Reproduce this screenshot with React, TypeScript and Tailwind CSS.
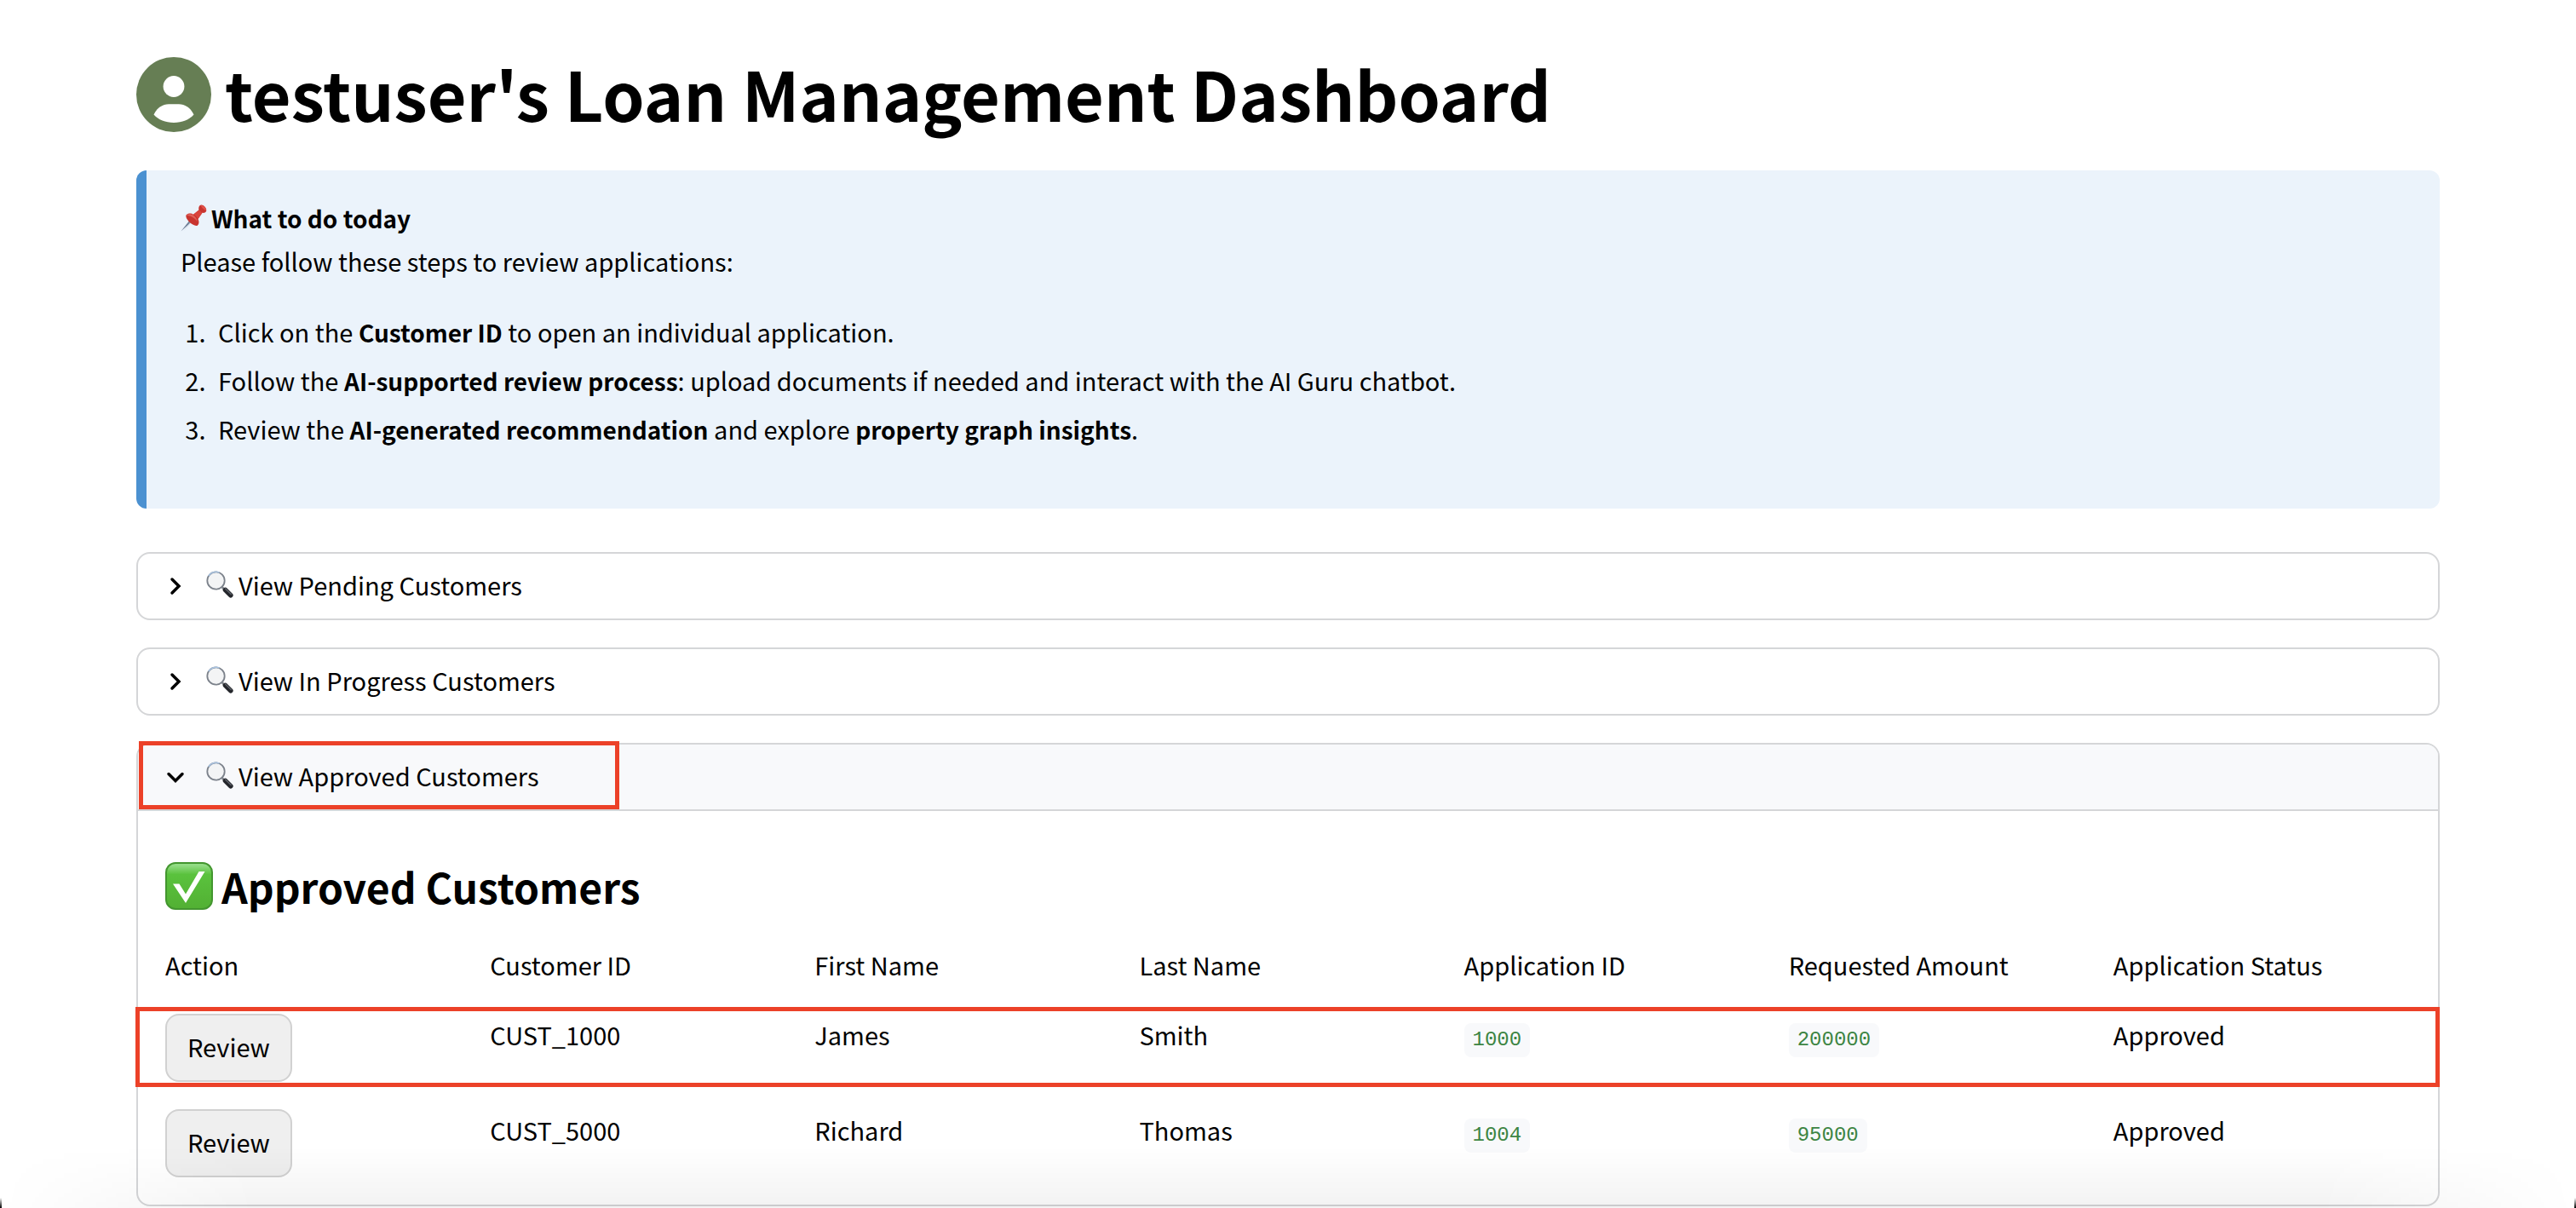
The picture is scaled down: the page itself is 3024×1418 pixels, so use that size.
import { useState } from "react";
import type { ReactNode } from "react";

function Avatar() {
  return (
    <svg viewBox="0 0 88 88" className="size-[88px] shrink-0" aria-hidden="true">
      <circle cx="44" cy="44" r="44" fill="#667e54" />
      <circle cx="44" cy="34.500" r="12.400" fill="#fff" />
      <path d="M20.500 67.500C25 58.500 31 55.500 38 55.200h12c7 .3 13 3.300 17.500 12.300C62 73.500 54 77 44 77s-18-3.500-23.500-9.500z" fill="#fff" />
    </svg>
  );
}

function Pin() {
  return (
    <svg viewBox="0 0 32 32" className="size-8 shrink-0" aria-hidden="true">
      <path d="M.4 31.600 11.500 17.500l2.500 2z" fill="#6f7f97" />
      <path d="M3.500 31.600 11.500 20l1.500.5z" fill="#c3ccd8" opacity=".6" />
      <path d="M6.500 12.500c2.500-2.700 6-2.500 8.500-.7l6.500-5.300c-.7-2.500 0-5 2-5.800 3-1 7.300 3.200 6.700 6.800-.4 2-2.500 2.800-4.700 2.300l-5 7.200c1.500 3 1.300 6.500-1 8-4 .8-14.500-7-13-12.500z" fill="#c8342f" />
      <path d="m15 11.800 6.500-5.300 4 3.300-5 7.200c-1-2-3-4.200-5.500-5.200z" fill="#d9443d" />
      <path d="M7 12.800c2-2 5-2 7.500-.5 3 2 5 5 5.300 8-2-3.300-7-7-12.800-7.500z" fill="#e06058" />
      <path d="M23.700 1c3-.7 6.500 3 6.300 6-2.500-.5-5.500-3.200-6.300-6z" fill="#e0524a" />
    </svg>
  );
}

function Magnifier() {
  return (
    <svg viewBox="0 0 32 32" className="size-8 shrink-0" aria-hidden="true">
      <path d="m18.500 19 3.500 3.500" stroke="#85898f" strokeWidth="2.500" />
      <path d="m22.500 22.500 6.300 6.200" stroke="#24262b" strokeWidth="5.600" strokeLinecap="round" />
      <path d="m22.500 21 6.800 6.600" stroke="#5e626a" strokeWidth="1.400" strokeLinecap="round" />
      <circle cx="11.500" cy="11.500" r="10.200" fill="#f3f4f5" stroke="#7c828b" strokeWidth="1.800" />
      <path d="M2.800 6.200A10.200 10.200 0 0 1 15.500 2" stroke="#a9c3e0" strokeWidth="1.500" fill="none" />
    </svg>
  );
}

function CheckMark() {
  return (
    <svg viewBox="0 0 56 56" className="size-14 shrink-0" aria-hidden="true">
      <defs>
        <linearGradient id="check-fill" x1="0" y1="0" x2="0" y2="1">
          <stop offset="0.050" stopColor="#93dc85" />
          <stop offset="0.250" stopColor="#5ac23d" />
          <stop offset="1" stopColor="#52b033" />
        </linearGradient>
      </defs>
      <rect x="1" y="1" width="54" height="54" rx="11" fill="url(#check-fill)" stroke="#43962f" strokeWidth="2" />
      <path d="M9 25.500h7.500L24 37.500 39.500 11H46.500L24 48z" fill="#fff" />
    </svg>
  );
}

function Chevron({ open }: { open: boolean }) {
  return (
    <svg
      viewBox="0 0 24 24"
      className="size-6 shrink-0"
      fill="none"
      stroke="#000"
      strokeWidth="3.500"
      strokeLinecap="round"
      aria-hidden="true"
    >
      {open ? <path d="m4 8.500 8 8 8-8" /> : <path d="m8 4 8 8-8 8" />}
    </svg>
  );
}

function Expander({
  title,
  defaultOpen = false,
  highlighted = false,
  children,
}: {
  title: string;
  defaultOpen?: boolean;
  highlighted?: boolean;
  children?: ReactNode;
}) {
  const [open, setOpen] = useState(defaultOpen);
  return (
    <section className="rounded-2xl border-2 border-[#d5d6d8]">
      <h2 className="relative">
        <button
          type="button"
          aria-expanded={open}
          onClick={() => setOpen(!open)}
          className={
            open
              ? "flex h-[78px] w-full items-center rounded-t-[14px] border-b-2 border-[#d5d6d8] bg-[#f8f9fb] px-8"
              : "flex h-[76px] w-full items-center px-8"
          }
        >
          <Chevron open={open} />
          <span className="ml-6 flex items-center gap-1.5 pb-1">
            <Magnifier />
            {title}
          </span>
        </button>
        {highlighted && (
          <span className="pointer-events-none absolute -top-1 left-px h-20 w-[564px] border-5 border-[#ec4128]" />
        )}
      </h2>
      {open && children}
    </section>
  );
}

const columns = [
  "Action",
  "Customer ID",
  "First Name",
  "Last Name",
  "Application ID",
  "Requested Amount",
  "Application Status",
];

const customers = [
  { id: "CUST_1000", first: "James", last: "Smith", application: "1000", amount: "200000", status: "Approved", highlighted: true },
  { id: "CUST_5000", first: "Richard", last: "Thomas", application: "1004", amount: "95000", status: "Approved", highlighted: false },
];

function Code({ children }: { children: ReactNode }) {
  return (
    <code className="mt-1.5 inline-block rounded-lg bg-[#f8f9fb] px-2.5 font-['Liberation_Mono',monospace] text-[24px] leading-10 text-[#3d8543]">
      {children}
    </code>
  );
}

function Strong({ children }: { children: ReactNode }) {
  return <strong className="text-[28px] leading-none font-bold">{children}</strong>;
}

export default function App() {
  return (
    <div className="min-h-screen bg-white font-['Noto_Sans_CJK_SC',sans-serif] text-[29px] leading-[51px] text-black">
      <main className="px-40 pt-14">
        <h1 className="flex items-center gap-4 text-[79px] leading-[106px] font-bold">
          <Avatar />
          <span className="pb-1">testuser's Loan Management Dashboard</span>
        </h1>

        <section className="mt-[34px] rounded-xl border-l-12 border-[#4b91d1] bg-[#ebf3fb] px-10 pt-[30px] pb-[68px]">
          <p className="flex items-center gap-1">
            <Pin />
            <span>
              <Strong>What to do today</Strong>
            </span>
          </p>
          <p>Please follow these steps to review applications:</p>
          <ol className="mt-8 ml-9 flex list-decimal flex-col gap-1.5">
            <li className="pl-2">
              Click on the <Strong>Customer ID</Strong> to open an individual application.
            </li>
            <li className="pl-2">
              Follow the <Strong>AI-supported review process</Strong>: upload documents if needed and interact with the
              AI Guru chatbot.
            </li>
            <li className="pl-2">
              Review the <Strong>AI-generated recommendation</Strong> and explore{" "}
              <Strong>property graph insights</Strong>.
            </li>
          </ol>
        </section>

        <div className="mt-[51px] flex flex-col gap-8">
          <Expander title="View Pending Customers" />
          <Expander title="View In Progress Customers" />
          <Expander title="View Approved Customers" defaultOpen highlighted>
            <div className="px-8 pt-13 pb-8">
              <h3 className="flex items-center gap-2.5 text-[48px] leading-[72px] font-bold">
                <CheckMark />
                Approved Customers
              </h3>
              <table className="mt-8 block w-full leading-12">
                <thead className="block">
                  <tr className="grid grid-cols-7 gap-8">
                    {columns.map((column) => (
                      <th key={column} scope="col" className="text-left font-normal">
                        {column}
                      </th>
                    ))}
                  </tr>
                </thead>
                <tbody className="mt-[34px] flex flex-col gap-8">
                  {customers.map((c) => (
                    <tr key={c.id} className="relative grid grid-cols-7 gap-8">
                      <td>
                        <button
                          type="button"
                          className="block h-20 rounded-2xl border-2 border-[#d1d1d1] bg-[#efefef] px-6 pb-1"
                        >
                          Review
                        </button>
                        {c.highlighted && (
                          <span className="pointer-events-none absolute -top-2 -right-[34px] -left-[35px] h-[94px] border-5 border-[#ec4128]" />
                        )}
                      </td>
                      <td>{c.id}</td>
                      <td>{c.first}</td>
                      <td>{c.last}</td>
                      <td>
                        <Code>{c.application}</Code>
                      </td>
                      <td>
                        <Code>{c.amount}</Code>
                      </td>
                      <td>{c.status}</td>
                    </tr>
                  ))}
                </tbody>
              </table>
            </div>
          </Expander>
        </div>
      </main>
      <div className="pointer-events-none fixed inset-x-0 bottom-0 h-18 bg-linear-to-t from-black/5 to-transparent [mask-image:linear-gradient(to_right,transparent,#000_10%,#000_90%,transparent)]" />
      <div className="pointer-events-none fixed bottom-0 left-0 h-3 w-0.5 bg-linear-to-t from-black to-transparent" />
      <div className="pointer-events-none fixed right-0 bottom-0 h-3 w-0.5 bg-linear-to-t from-black to-transparent" />
    </div>
  );
}
